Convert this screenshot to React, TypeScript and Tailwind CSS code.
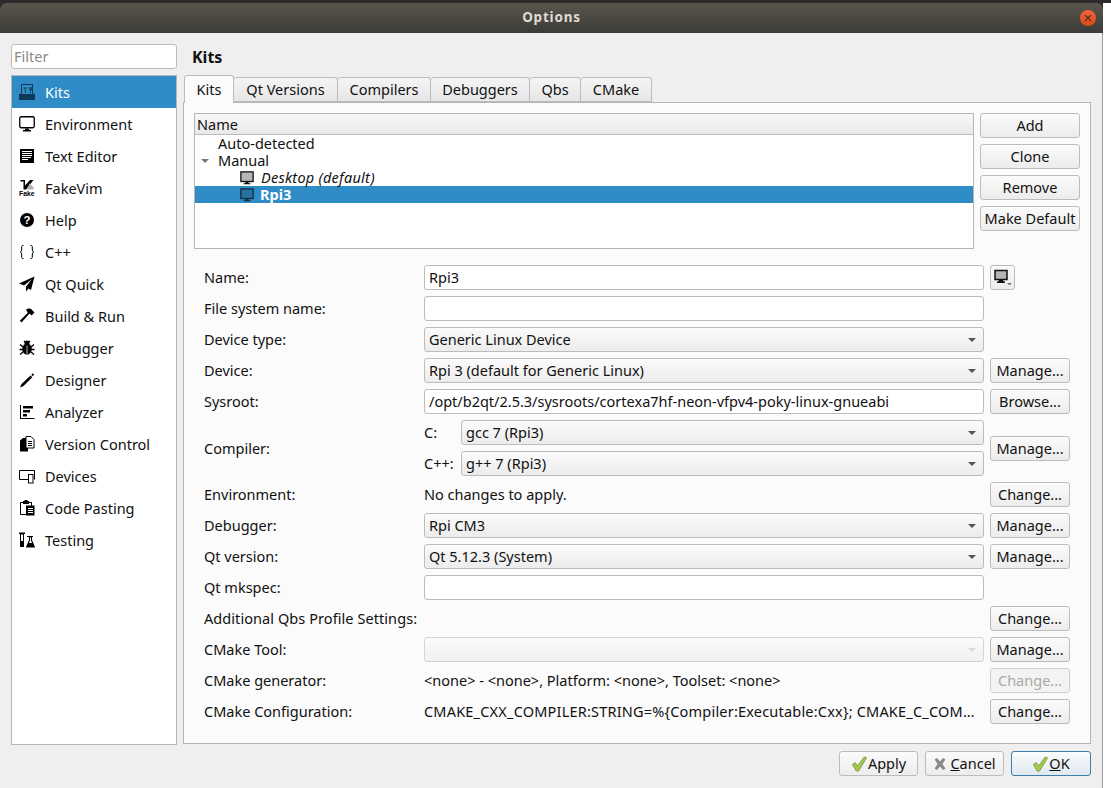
import type { ReactNode } from "react"

// sidebar icons, hand drawn on a 16x16 box
const Kits = () => (
  <svg width="16" height="16" viewBox="0 0 16 16" fill="#0f3a57">
    <path d="M2 0h12v10h-1V1H3v9H2z" />
    <path d="M4.500 3.500H8v1H6.700v4.500H5.800V4.500H4.500z" />
    <path d="M9.500 3h.8v2h.6V3h.7v2h.6V3h.8v2.500l-1 .8V9h-1V6.300l-1-.8z" />
    <path d="M0 10h16v6H0z" />
  </svg>
)
const Env = () => (
  <svg width="16" height="16" viewBox="0 0 16 16">
    <rect x="0.750" y="0.750" width="14.500" height="11" rx="1.500" fill="none" stroke="#000" strokeWidth="1.300" />
    <path d="M6.500 12.500h3l.7 1.500H12v1.500H4V14h1.800z" fill="#000" />
  </svg>
)
const TextEd = () => (
  <svg width="16" height="16" viewBox="0 0 16 16">
    <rect x="1" y="1" width="14" height="14" fill="#000" />
    <path d="M3 3.500h10M3 5.500h10M3 7.500h10M3 9.500h9M3 11.500h6" stroke="#fff" strokeWidth="1" />
  </svg>
)
const Fake = () => (
  <svg width="16" height="16" viewBox="0 0 16 16">
    <path d="M1.500 0h4.500v5.500L11 0h3.500L7 9.500H4.500V1.500H1.500z" fill="#000" />
    <path d="M10.500 3.500L15 8l-1 1.500H8z" fill="#b0b0b0" />
    <text x="0" y="15.800" fontSize="6.800" fontWeight="700" fontFamily="'Liberation Sans', sans-serif" fill="#000">Fake</text>
  </svg>
)
const Help = () => (
  <svg width="16" height="16" viewBox="0 0 16 16">
    <circle cx="8" cy="8" r="7" fill="#000" />
    <text x="8" y="12" fontSize="11.500" fontWeight="700" textAnchor="middle" fontFamily="'Liberation Sans', sans-serif" fill="#fff">?</text>
  </svg>
)
const Cpp = () => (
  <svg width="16" height="16" viewBox="0 0 16 16" fill="none" stroke="#000" strokeWidth="1">
    <path d="M4.500 1.500H4C3 1.500 2.700 2 2.700 3v3c0 1-.5 1.700-1.400 2 .9.300 1.400 1 1.400 2v3c0 1 .3 1.500 1.300 1.500h.5" />
    <path d="M11.500 1.500h.5c1 0 1.300.5 1.300 1.500v3c0 1 .5 1.700 1.400 2-.9.300-1.400 1-1.400 2v3c0 1-.3 1.500-1.300 1.500h-.5" />
  </svg>
)
const Quick = () => (
  <svg width="16" height="16" viewBox="0 0 16 16" fill="#000">
    <path d="M15.500.500L0 7.500l4 1.500 1 .5 8-6.500-6 7.500v5l2.500-3 2.500 1.500z" />
  </svg>
)
const Hammer = () => (
  <svg width="16" height="16" viewBox="0 0 16 16" fill="#000">
    <path d="M7 1.500C9.500 0 12 .5 13 2l2.500 2.500-3 3-2-2-8 9L.8 12.800l8-8z" />
  </svg>
)
const Bug = () => (
  <svg width="16" height="16" viewBox="0 0 16 16" fill="#000" stroke="#000">
    <ellipse cx="8" cy="9" rx="4.800" ry="5.800" stroke="none" />
    <circle cx="8" cy="3" r="2.500" stroke="none" />
    <path d="M1 4.500l3 2.500M15 4.500l-3 2.500M.5 9.500h3.500M15.500 9.500H12M1 14.500l3-2.500M15 14.500l-3-2.500M5 1l1.500 1.500M11 1L9.500 2.500" strokeWidth="1.300" fill="none" />
    <path d="M8 5.500v9" stroke="#fff" strokeWidth=".7" />
  </svg>
)
const Pencil = () => (
  <svg width="16" height="16" viewBox="0 0 16 16" fill="#000">
    <path d="M11.500 3.500l1.800 1.800-8.800 8.700L1 15.500l1.500-3.500z" />
    <path d="M12.300 2.700l1.300-1.500 1.500 1.400-1.300 1.700z" />
  </svg>
)
const Analyzer = () => (
  <svg width="16" height="16" viewBox="0 0 16 16" fill="#000">
    <path d="M1 1h1v13h13.500v1H1z" />
    <path d="M4 2h10v2.500H4zM4 6h7v2.500H4zM4 10h4v2.500H4z" />
  </svg>
)
const Vcs = () => (
  <svg width="16" height="16" viewBox="0 0 16 16">
    <path d="M1 4.500L4 2h5v13.500H1z" fill="#000" />
    <path d="M7 .500h5l3 3V12H7z" fill="#fff" stroke="#000" />
    <path d="M9 5.500h4M9 7.500h4M9 9.500h4" stroke="#000" />
  </svg>
)
const Devices = () => (
  <svg width="16" height="16" viewBox="0 0 16 16" fill="none" stroke="#000" strokeWidth="1">
    <path d="M9 11.500H.500v-9h15v9" />
    <rect x="9.500" y="6.500" width="4.500" height="8.500" fill="#fff" />
  </svg>
)
const Paste = () => (
  <svg width="16" height="16" viewBox="0 0 16 16">
    <path d="M1.500 2.500h11v12h-11z" fill="none" stroke="#000" />
    <path d="M4 1h1.500V0h3v1H10v3H4z" fill="#000" />
    <path d="M7 5.500h8.500V15.500H7z" fill="#000" />
    <path d="M9 8.500h5M9 10.500h5M9 12.500h5" stroke="#fff" />
  </svg>
)
const Testing = () => (
  <svg width="16" height="16" viewBox="0 0 16 16">
    <path d="M0 .500h6V2H5v13H1V2H0z" fill="#000" />
    <path d="M2 2.500h2V14H2z" fill="#fff" />
    <path d="M2 9h2v5H2z" fill="#000" />
    <path d="M8 4h6v1h-1v3l2.800 6.500v1H7.200v-1L10 8V5H8z" fill="#000" />
    <path d="M11 5.500h1v3l1 2.500H10l1-2.500z" fill="#fff" />
  </svg>
)

const sideItems: [string, ReactNode][] = [
  ["Kits", <Kits />],
  ["Environment", <Env />],
  ["Text Editor", <TextEd />],
  ["FakeVim", <Fake />],
  ["Help", <Help />],
  ["C++", <Cpp />],
  ["Qt Quick", <Quick />],
  ["Build & Run", <Hammer />],
  ["Debugger", <Bug />],
  ["Designer", <Pencil />],
  ["Analyzer", <Analyzer />],
  ["Version Control", <Vcs />],
  ["Devices", <Devices />],
  ["Code Pasting", <Paste />],
  ["Testing", <Testing />],
]

const tabs = [
  ["Qt Versions", "w-[104px]"],
  ["Compilers", "w-[93px]"],
  ["Debuggers", "w-[99px]"],
  ["Qbs", "w-[51px]"],
  ["CMake", "w-[71px]"],
]

function Btn({ children, className = "w-[80px]", disabled }: { children: ReactNode; className?: string; disabled?: boolean }) {
  return (
    <div className={`h-[25px] shrink-0 flex items-center justify-center rounded-[3px] border whitespace-nowrap ${disabled ? "text-[#a9a9a9] border-[#cfcfcf] bg-[#f3f3f3]" : "border-[#bcbcbc] bg-gradient-to-b from-[#fbfbfb] to-[#ececec]"} ${className}`}>
      {children}
    </div>
  )
}

function Input({ value = "" }: { value?: string }) {
  return (
    <div className="h-[25px] flex items-center px-[4px] rounded-[3px] border border-[#bcbcbc] bg-white whitespace-nowrap">
      {value}
    </div>
  )
}

function Combo({ value = "", disabled, className = "" }: { value?: string; disabled?: boolean; className?: string }) {
  return (
    <div className={`h-[25px] flex items-center justify-between pl-[4px] pr-[7px] rounded-[3px] border border-[#bcbcbc] bg-gradient-to-b from-[#fbfbfb] to-[#ececec] whitespace-nowrap ${className}`}>
      <span>{value}</span>
      <span className={`w-0 h-0 border-x-[4px] border-x-transparent border-t-[4px] ${disabled ? "border-t-[#c4c4c4]" : "border-t-[#555555]"}`} />
    </div>
  )
}

function Check() {
  return (
    <svg width="17" height="18" viewBox="0 0 18 18">
      <path d="M1.500 9.500l3-2 2.500 3.500L14 1.500l2.500 1L8 16.500H5.500z" fill="#a5c94f" stroke="#6f8f33" strokeWidth=".8" />
    </svg>
  )
}

export default function App() {
  return (
    <div className="w-[1111px] h-[788px] bg-white text-[14.500px] leading-none text-[#111] overflow-hidden" style={{ fontFamily: "'Noto Sans', sans-serif" }}>
      <div className="h-[3px] bg-[#2d2c2a]" />
      <div className="w-[1103px] h-[785px] flex flex-col bg-[#2d2c2a]">
        {/* title bar */}
        <div className="h-[30px] shrink-0 flex items-center justify-center relative rounded-t-[7px] bg-gradient-to-b from-[#5a564d] to-[#3c3b37]">
          <span className="font-bold text-[13.500px] tracking-[0.8px] text-[#dfdbd2]">Options</span>
          <div className="absolute right-[7px] top-[7px] w-[16px] h-[16px] rounded-full bg-gradient-to-b from-[#f0673a] to-[#d9491a] flex items-center justify-center">
            <svg width="8" height="8" viewBox="0 0 8 8"><path d="M1 1l6 6M7 1L1 7" stroke="#5e2a16" strokeWidth="1.300" /></svg>
          </div>
        </div>

        <div className="flex-1 min-h-0 bg-[#efefef] pl-[11px] pr-[11px] border-r border-[#9c9c9c] flex gap-[6px] pt-[11px]">
          {/* left column */}
          <div className="w-[166px] shrink-0 flex flex-col gap-[6px]">
            <div className="h-[25px] shrink-0 flex items-center px-[2px] rounded-[3px] border border-[#bcbcbc] bg-white text-[#8a8a8a]">Filter</div>
            <div className="h-[670px] border border-[#b5b5b5] bg-white">
              {sideItems.map(([name, icon], i) => (
                <div key={name} className={`h-[32px] flex items-center gap-[10px] pl-[7px] ${i === 0 ? "bg-[#308cc6] text-white" : ""}`}>
                  {icon}
                  <span>{name}</span>
                </div>
              ))}
            </div>
          </div>

          {/* right column */}
          <div className="w-[908px] shrink-0 flex flex-col">
            <div className="h-[31px] shrink-0 flex items-center pl-[9px] pb-[5px] font-bold text-[16px]">Kits</div>
            <div className="flex h-[27px] shrink-0 items-end relative z-10">
              <div className="w-[50px] ml-[1px] h-[28px] -mb-px flex items-center justify-center rounded-t-[3px] border border-b-0 border-[#bcbcbc] bg-[#fbfbfb]">Kits</div>
              {tabs.map(([t, w]) => (
                <div key={t} className={`${w} h-[25px] flex items-center justify-center rounded-t-[3px] border border-l-0 border-[#bcbcbc] bg-gradient-to-b from-[#f4f4f4] to-[#e6e6e6]`}>{t}</div>
              ))}
            </div>

            {/* pane */}
            <div className="h-[642px] shrink-0 border border-[#b5b5b5] bg-[#fbfbfb] pl-[10px] pt-[10px]">
              <div className="flex gap-[6px]">
                <div className="w-[780px] h-[136px] border border-[#b5b5b5] bg-white">
                  <div className="h-[21px] flex items-center pl-[2px] border-b border-[#bcbcbc] bg-gradient-to-b from-[#f8f8f8] to-[#e8e8e8]">Name</div>
                  <div className="h-[17px] flex items-center pl-[23px]">Auto-detected</div>
                  <div className="h-[17px] flex items-center pl-[6px] gap-[9px]">
                    <span className="w-0 h-0 border-x-[4px] border-x-transparent border-t-[4px] border-t-[#777777]" />
                    Manual
                  </div>
                  <div className="h-[17px] flex items-center pl-[45px] gap-[7px] italic tracking-[0.25px]">
                    <svg width="14" height="14" viewBox="0 0 16 16"><rect x="1" y="1" width="14" height="11" fill="#b5b5b5" stroke="#111" strokeWidth="1.500" /><path d="M6.500 12.500h3l.7 1.500H12v1.200H4V14h1.800z" fill="#111" /></svg>
                    Desktop (default)
                  </div>
                  <div className="h-[17px] flex items-center pl-[45px] gap-[6px] font-bold bg-[#308cc6] text-white">
                    <svg width="14" height="14" viewBox="0 0 16 16"><rect x="1" y="1" width="14" height="11" fill="#2b6f9e" stroke="#0f2f45" strokeWidth="1.500" /><path d="M6.500 12.500h3l.7 1.500H12v1.200H4V14h1.800z" fill="#0f2f45" /></svg>
                    Rpi3
                  </div>
                </div>
                <div className="flex flex-col gap-[6px]">
                  <Btn className="w-[100px]">Add</Btn>
                  <Btn className="w-[100px]">Clone</Btn>
                  <Btn className="w-[100px]">Remove</Btn>
                  <Btn className="w-[100px]">Make Default</Btn>
                </div>
              </div>

              <div className="grid grid-cols-[214px_560px_80px] gap-x-[6px] gap-y-[6px] pl-[10px] pt-[16px] items-center">
                <span>Name:</span>
                <Input value="Rpi3" />
                <Btn className="w-[25px]">
                  <svg width="20" height="18" viewBox="0 0 20 18"><rect x="2" y="1.500" width="12" height="9" fill="#b5b5b5" stroke="#111" strokeWidth="1.500" /><path d="M6 11h4l.7 1.500h1.300V14H4v-1.500h1.300z" fill="#111" /><path d="M14 14h5l-2.500 2.500z" fill="#777" /></svg>
                </Btn>

                <span>File system name:</span>
                <Input />
                <span />

                <span>Device type:</span>
                <Combo value="Generic Linux Device" />
                <span />

                <span>Device:</span>
                <Combo value="Rpi 3 (default for Generic Linux)" />
                <Btn>Manage...</Btn>

                <span>Sysroot:</span>
                <Input value="/opt/b2qt/2.5.3/sysroots/cortexa7hf-neon-vfpv4-poky-linux-gnueabi" />
                <Btn>Browse...</Btn>

                <span>Compiler:</span>
                <div className="grid grid-cols-[31px_1fr] gap-x-[6px] gap-y-[6px] items-center">
                  <span>C:</span>
                  <Combo value="gcc 7 (Rpi3)" />
                  <span>C++:</span>
                  <Combo value="g++ 7 (Rpi3)" />
                </div>
                <Btn>Manage...</Btn>

                <span>Environment:</span>
                <span>No changes to apply.</span>
                <Btn>Change...</Btn>

                <span>Debugger:</span>
                <Combo value="Rpi CM3" />
                <Btn>Manage...</Btn>

                <span>Qt version:</span>
                <Combo value="Qt 5.12.3 (System)" />
                <Btn>Manage...</Btn>

                <span>Qt mkspec:</span>
                <Input />
                <span />

                <span className="col-span-2 tracking-[0.07px]">Additional Qbs Profile Settings:</span>
                <Btn>Change...</Btn>

                <span>CMake Tool:</span>
                <Combo disabled className="opacity-60" />
                <Btn>Manage...</Btn>

                <span>CMake generator:</span>
                <span>{"<none> - <none>, Platform: <none>, Toolset: <none>"}</span>
                <Btn disabled>Change...</Btn>

                <span>CMake Configuration:</span>
                <span className="whitespace-nowrap tracking-[0.2px]">{"CMAKE_CXX_COMPILER:STRING=%{Compiler:Executable:Cxx}; CMAKE_C_COM…"}</span>
                <Btn>Change...</Btn>
              </div>
            </div>

            {/* dialog buttons */}
            <div className="flex justify-end gap-[7px] pt-[7px]">
              <Btn className="w-[79px]"><Check />Apply</Btn>
              <Btn className="w-[79px] gap-[3px]">
                <svg width="14" height="14" viewBox="0 0 14 14"><path d="M2 2.500l2-1L7 5l3-3.500 2 1L9 7l3 4.500-2 1L7 9l-3 3.500-2-1L5 7z" fill="#8c8c8c" stroke="#6e6e6e" strokeWidth=".6" /></svg>
                <span><span className="underline">C</span>ancel</span>
              </Btn>
              <div className="w-[80px] h-[25px] shrink-0 flex items-center justify-center rounded-[3px] border border-[#3f7ea8] bg-gradient-to-b from-[#fbfcfd] to-[#dfe9f1]">
                <Check /><span><span className="underline">O</span>K</span>
              </div>
            </div>
          </div>
        </div>
      </div>
    </div>
  )
}
